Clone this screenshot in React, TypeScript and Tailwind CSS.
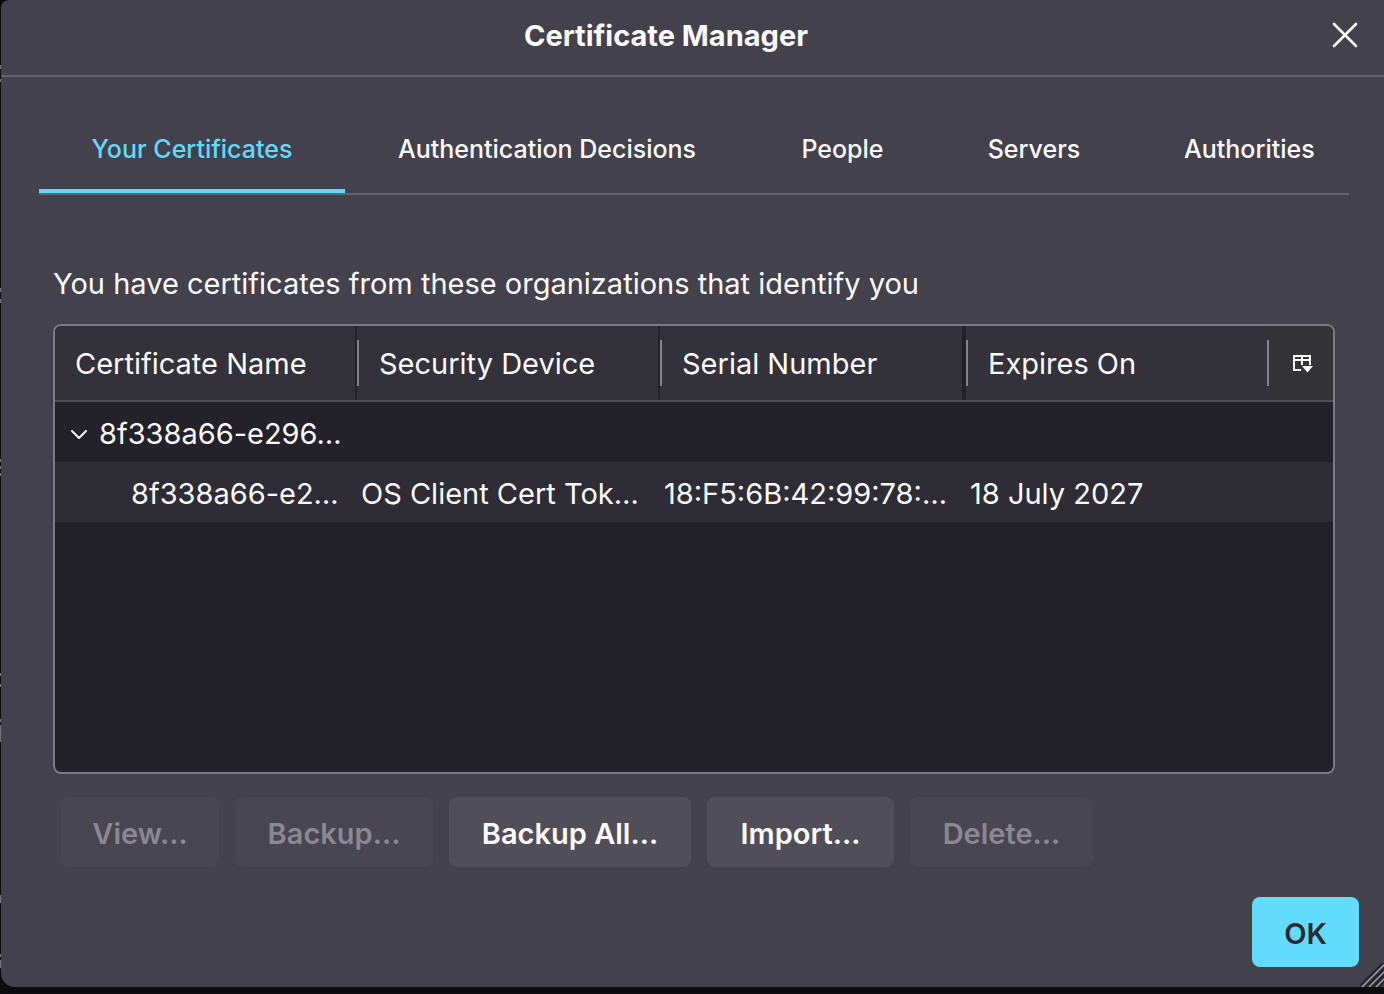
import React from "react";

const tabs = ["Your Certificates", "Authentication Decisions", "People", "Servers", "Authorities"];

const actions = [
  { label: "View…", enabled: false, width: "w-[158px]" },
  { label: "Backup…", enabled: false, width: "w-[198px]" },
  { label: "Backup All…", enabled: true, width: "w-[242px]" },
  { label: "Import…", enabled: true, width: "w-[187px]" },
  { label: "Delete…", enabled: false, width: "w-[183px]" },
];

function Backdrop() {
  return (
    <svg className="h-[987px] w-px shrink-0" viewBox="0 0 1 987" preserveAspectRatio="none" aria-hidden="true">
      <path
        d="M0 65h1v4H0zM0 79h1v3H0zM0 288h1v4H0zM0 299h1v4H0zM0 459h1v3H0zM0 466h1v3H0zM0 473h1v3H0zM0 673h1v3H0zM0 684h1v3H0zM0 719h1v3H0zM0 725h1v17H0zM0 895h1v8H0zM0 954h1v3H0zM0 960h1v8H0z"
        fill="#77767b"
      />
    </svg>
  );
}

function Header() {
  return (
    <header className="flex h-[77px] items-center border-b-2 border-[#64626d] pr-[23px] pb-1">
      <h1 className="flex-1 pl-0.5 text-center text-[29px] leading-9 font-bold">Certificate Manager</h1>
      <button type="button" aria-label="Close" className="flex size-8 items-center justify-center">
        <svg className="size-8" viewBox="0 0 32 32" fill="none" stroke="currentColor" strokeWidth="2.6" strokeLinecap="round">
          <path d="M5 4 27 26M27 4 5 26" />
        </svg>
      </button>
    </header>
  );
}

function Tabs() {
  return (
    <div
      role="tablist"
      className="mr-[35px] ml-[38px] grid grid-cols-[306fr_404fr_187fr_196fr_217fr] border-b-2 border-[#64626d] pt-[34px] text-[25px] leading-8 font-medium"
    >
      {tabs.map((tab, i) => (
        <button
          key={tab}
          type="button"
          role="tab"
          aria-selected={i === 0}
          className={
            i === 0
              ? "border-b-4 border-[#61dafb] pt-[22px] pb-6 text-center whitespace-nowrap text-[#61dafb]"
              : i === tabs.length - 1
                ? "border-b-4 border-transparent pt-[22px] pb-6 pl-[52px] text-left whitespace-nowrap"
                : "border-b-4 border-transparent pt-[22px] pb-6 text-center whitespace-nowrap"
          }
        >
          {tab}
        </button>
      ))}
    </div>
  );
}

function Column({ label, divider, gap }: { label: string; divider: boolean; gap: string }) {
  return (
    <th scope="col" className="p-0 text-left font-normal">
      <div className={`flex h-[74px] items-center border-[#23222b] bg-[#33313a] ${gap}`}>
        {divider && <span className="h-[46px] w-0.5 bg-[#85848a]" />}
        <span className={divider ? "pt-0.5 pl-5" : "pt-0.5 pl-5"}>{label}</span>
      </div>
    </th>
  );
}

function CertificateTable() {
  return (
    <div className="h-[450px] overflow-hidden rounded-lg border-2 border-[#7b7a82] bg-[#23222b]">
      <table className="w-full table-fixed border-separate border-spacing-0 text-[29px] leading-9 whitespace-nowrap">
        <colgroup>
          <col className="w-[302px]" />
          <col className="w-[303px]" />
          <col className="w-[306px]" />
          <col />
          <col className="w-[66px]" />
        </colgroup>
        <thead>
          <tr className="[&>th]:border-b-2 [&>th]:border-[#4e4d55]">
            <Column label="Certificate Name" divider={false} gap="border-r-2" />
            <Column label="Security Device" divider gap="border-r-2" />
            <Column label="Serial Number" divider gap="border-r-4" />
            <Column label="Expires On" divider gap="border-r-0" />
            <th scope="col" className="bg-[#343338] p-0">
              <div className="flex h-[74px] items-center">
                <span className="h-[46px] w-0.5 bg-[#85848a]" />
                <button type="button" aria-label="Select columns to display" className="ml-[22px] pt-0.5">
                  <svg className="size-6" viewBox="0 0 24 24" fill="none">
                    <path d="M10 18H3V4h16v9M3 8h16M11 4v9" stroke="white" strokeWidth="2" />
                    <path d="M11 14h11l-5.500 6.500z" fill="white" />
                  </svg>
                </button>
              </div>
            </th>
          </tr>
        </thead>
        <tbody>
          <tr className="h-[60px]">
            <td className="p-0 pt-[3px]">
              <div className="flex items-center pl-[14px]">
                <svg className="size-5" viewBox="0 0 20 20" fill="none" stroke="currentColor" strokeWidth="2" strokeLinecap="round" strokeLinejoin="round">
                  <path d="m3 7 7 7 7-7" />
                </svg>
                <span className="pl-[10px]">8f338a66-e296…</span>
              </div>
            </td>
            <td className="p-0" />
            <td className="p-0" />
            <td className="p-0" />
            <td className="p-0" />
          </tr>
          <tr className="h-[60px] bg-[#2e2d36]">
            <td className="p-0 pt-[3px] pl-[76px]">8f338a66-e2…</td>
            <td className="p-0 pt-[3px] pl-1">OS Client Cert Tok…</td>
            <td className="p-0 pt-[3px] pl-1">18:F5:6B:42:99:78:…</td>
            <td className="p-0 pt-[3px] pl-1">18 July 2027</td>
            <td className="p-0" />
          </tr>
        </tbody>
      </table>
    </div>
  );
}

export default function App() {
  return (
    <div className="flex min-h-screen items-start overflow-hidden bg-[#0c0c0e] font-['Inter',sans-serif] text-[#fbfbfe]">
      <Backdrop />
      <main className="relative min-w-0 flex-1 rounded-tl-lg rounded-bl-[14px] bg-[#43414c] pb-5">
        <Header />
        <Tabs />
        <section className="pt-[71px] pr-[49px] pl-[52px]">
          <h2 className="pb-[22px] text-[29px] leading-9 whitespace-nowrap">
            You have certificates from these organizations that identify you
          </h2>
          <CertificateTable />
          <div className="flex gap-4 pt-[23px] pl-2">
            {actions.map((a) => (
              <button
                key={a.label}
                type="button"
                disabled={!a.enabled}
                className={`h-[70px] rounded-lg pt-[3px] text-center text-[29px] leading-9 font-semibold whitespace-nowrap ${a.width} ${
                  a.enabled ? "bg-[#504f59]" : "bg-[#484650] text-[#8a8892]"
                }`}
              >
                {a.label}
              </button>
            ))}
          </div>
        </section>
        <footer className="flex justify-end pt-[30px] pr-[25px]">
          <button type="button" className="h-[70px] w-[107px] rounded-lg bg-[#63dbfc] pt-[3px] text-[29px] leading-9 font-semibold text-[#2b2a33]">
            OK
          </button>
        </footer>
        <svg className="absolute right-0 bottom-0 h-6 w-6" viewBox="0 0 24 24" fill="none" aria-hidden="true">
          <path d="M0 23 24-1M8 23 24 7M15 23l9-9" stroke="#25242b" strokeWidth="2" />
          <path d="M2 24 25 1M9 24 25 8M16 24l9-9" stroke="#a3a2a7" strokeWidth="1.500" />
          <path d="M5 24 25 4M12 24l13-13M19 24l6-6" stroke="#25242b" strokeWidth="2" />
        </svg>
      </main>
    </div>
  );
}
